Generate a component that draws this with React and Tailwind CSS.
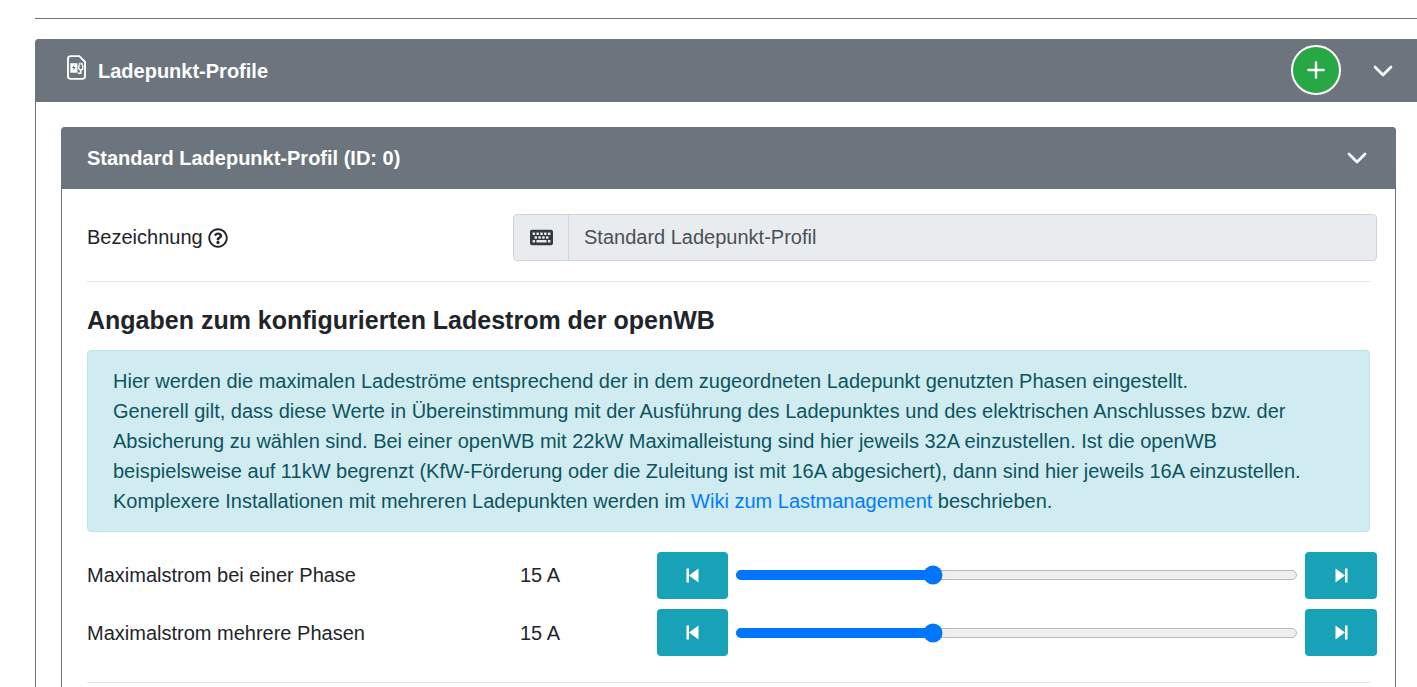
import React from 'react'
import { FaKeyboard, FaRegQuestionCircle } from 'react-icons/fa'
import { ChevronDown, Plus } from 'lucide-react'

const FileChargeIcon = () => (
  <svg viewBox="0 0 20 26" className="h-[25px] w-[19px]" fill="none">
    <path d="M4 1h9l6 6v15a3 3 0 0 1-3 3H4a3 3 0 0 1-3-3V4a3 3 0 0 1 3-3z" stroke="#fff" strokeWidth="2" />
    <path d="M3.5 8.5h7.5V18.500H3.500z" fill="#fff" />
    <path d="M7.800 10l-2.500 3.600h1.800l-.7 3 2.800-4H7.300z" fill="#6c757d" />
    <path d="M12.500 10v3.500a2 2 0 0 0 4 0V10M13.500 10V8M15.500 10V8M14.500 15.500v3.500h-3" stroke="#fff" strokeWidth="1.500" />
  </svg>
)

const StepBack = () => (
  <svg viewBox="0 0 13 15" className="h-[15px] w-[13px]" fill="#fff">
    <path d="M0.500 0.500h2.500v14H0.500zM3 7.500L12.500 0.500v14z" />
  </svg>
)

const StepForward = () => (
  <svg viewBox="0 0 13 15" className="h-[15px] w-[13px]" fill="#fff">
    <path d="M12.500 0.500h-2.500v14h2.500zM10 7.500L0.500 0.500v14z" />
  </svg>
)

const CurrentSlider = ({ label, value, percent }) => (
  <div className="-mr-[7px] flex h-[47px] items-center">
    <div className="w-[433px]">{label}</div>
    <div className="w-[137px]">{value}</div>
    <button type="button" className="flex h-[47px] w-[71px] items-center justify-center rounded-[4px] bg-[#17a2b8]">
      <StepBack />
    </button>
    <div className="relative mx-2 h-[10px] flex-1 rounded-full border border-[#b8b8b8] bg-[#efefef]">
      <div className="absolute -top-px -left-px h-[10px] rounded-full bg-[#0075ff]" style={{ width: `${percent}%` }} />
      <div className="absolute top-1/2 h-[19px] w-[19px] -translate-x-1/2 -translate-y-1/2 rounded-full bg-[#0075ff]" style={{ left: `${percent}%` }} />
    </div>
    <button type="button" className="flex h-[47px] w-[72px] items-center justify-center rounded-[4px] bg-[#17a2b8]">
      <StepForward />
    </button>
  </div>
)

const App = () => {
  return (
    <div className="h-[687px] w-[1417px] overflow-hidden bg-white pl-[35px] font-['Liberation_Sans',Arial,sans-serif] text-[20px] leading-[26px] text-[#212529]">
      <div className="w-[1387px] pt-[18px]">
        <hr className="border-t border-[#6c757d]" />
        <div className="mt-5 rounded-[4px] border border-[#6c757d]">
          <div className="-m-px flex h-[63px] items-center rounded-t-[4px] bg-[#6c757d] pr-[23px] pl-[32px] font-bold text-white">
            <div className="-mt-1.5 mr-3">
              <FileChargeIcon />
            </div>
            <span>Ladepunkt-Profile</span>
            <button type="button" className="mr-[26px] ml-auto flex h-[50px] w-[50px] -translate-y-px items-center justify-center rounded-full border-2 border-white bg-[#28a745]">
              <Plus className="h-[26px] w-[26px]" strokeWidth={2.2} />
            </button>
            <ChevronDown className="h-[32px] w-[32px]" strokeWidth={2} />
          </div>

          <div className="px-[25px] pt-[26px] pb-[25px]">
            <div className="rounded-[4px] border border-[#6c757d]">
              <div className="-m-px flex h-[62px] items-center justify-between rounded-t-[4px] bg-[#6c757d] pr-[23px] pl-[26px] font-bold text-white">
                <span>Standard Ladepunkt-Profil (ID: 0)</span>
                <ChevronDown className="h-[32px] w-[32px]" strokeWidth={2} />
              </div>

              <div className="px-[25px] pt-[26px] pb-[25px]">
                <div className="-mr-[7px] flex h-[47px] items-center">
                  <div className="flex w-[426px] items-center gap-[5px] pb-0.5">
                    Bezeichnung
                    <FaRegQuestionCircle className="mt-0.5 text-[20px]" />
                  </div>
                  <div className="flex h-[47px] flex-1 overflow-hidden rounded-[4px] border border-[#ced4da] bg-[#e9ecef]">
                    <div className="flex w-[55px] items-center justify-center border-r border-[#ced4da]">
                      <FaKeyboard className="text-[23px] text-[#343a40]" />
                    </div>
                    <div className="flex flex-1 items-center pb-0.5 pl-[15px] text-[#495057]">Standard Ladepunkt-Profil</div>
                  </div>
                </div>

                <hr className="mt-5 border-t border-[#e3e5e7]" />

                <h3 className="mt-[22px] text-[25px] leading-[32px] font-bold">Angaben zum konfigurierten Ladestrom der openWB</h3>

                <div className="mt-[14px] rounded-[4px] border border-[#bee5eb] bg-[#d1ecf1] px-[25px] pt-[15px] pb-[15px] leading-[30px] text-[#0c5460]">
                  Hier werden die maximalen Ladeströme entsprechend der in dem zugeordneten Ladepunkt genutzten Phasen eingestellt.
                  <br />
                  Generell gilt, dass diese Werte in Übereinstimmung mit der Ausführung des Ladepunktes und des elektrischen Anschlusses bzw. der Absicherung zu wählen sind. Bei einer openWB mit 22kW Maximalleistung sind hier jeweils 32A einzustellen. Ist die openWB beispielsweise auf 11kW begrenzt (KfW-Förderung oder die Zuleitung ist mit 16A abgesichert), dann sind hier jeweils 16A einzustellen.
                  <br />
                  Komplexere Installationen mit mehreren Ladepunkten werden im <a href="#" className="text-[#007bff]">Wiki zum Lastmanagement</a> beschrieben.
                </div>

                <div className="mt-[19.6px] flex flex-col gap-[10.6px]">
                  <CurrentSlider label="Maximalstrom bei einer Phase" value="15 A" percent={35} />
                  <CurrentSlider label="Maximalstrom mehrere Phasen" value="15 A" percent={35} />
                </div>

                <hr className="mt-[26px] border-t border-[#e3e5e7]" />
              </div>
            </div>
          </div>
        </div>
      </div>
    </div>
  )
}

export default App
